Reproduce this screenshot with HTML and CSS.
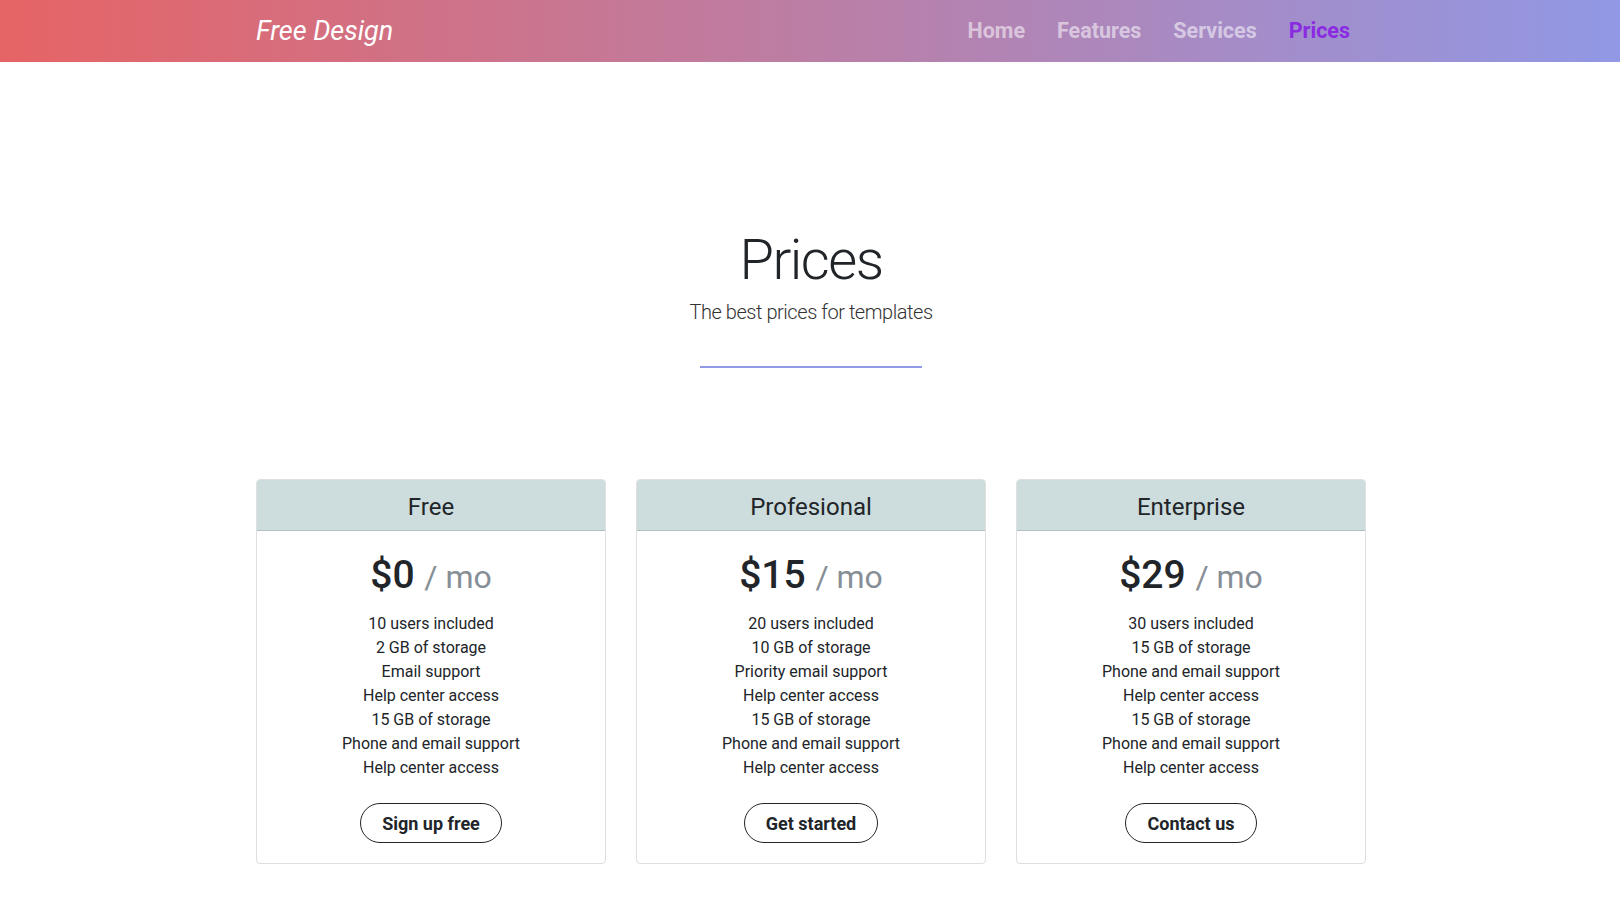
FILE: index.html
```html
<!DOCTYPE html>
<html lang="en">
<head>
<meta charset="utf-8">
<title>Free Design - Prices</title>
<link rel="stylesheet" href="styles.css">
</head>
<body>
<nav class="navbar">
  <div class="container nav-inner">
    <a class="brand" href="#">Free Design</a>
    <ul class="nav-links">
      <li><a class="nav-link" href="#">Home</a></li>
      <li><a class="nav-link" href="#">Features</a></li>
      <li><a class="nav-link" href="#">Services</a></li>
      <li><a class="nav-link active" href="#">Prices</a></li>
    </ul>
  </div>
</nav>

<main class="container">
  <header class="pricing-header">
    <h1 class="display-title">Prices</h1>
    <p class="lead">The best prices for templates</p>
    <div class="divider"></div>
  </header>

  <section class="card-deck">
    <div class="card">
      <div class="card-header"><h4 class="card-name">Free</h4></div>
      <div class="card-body">
        <h1 class="price">$0 <small class="per">/ mo</small></h1>
        <ul class="features">
          <li>10 users included</li>
          <li>2 GB of storage</li>
          <li>Email support</li>
          <li>Help center access</li>
          <li>15 GB of storage</li>
          <li>Phone and email support</li>
          <li>Help center access</li>
        </ul>
        <button class="btn" type="button">Sign up free</button>
      </div>
    </div>
    <div class="card">
      <div class="card-header"><h4 class="card-name">Profesional</h4></div>
      <div class="card-body">
        <h1 class="price">$15 <small class="per">/ mo</small></h1>
        <ul class="features">
          <li>20 users included</li>
          <li>10 GB of storage</li>
          <li>Priority email support</li>
          <li>Help center access</li>
          <li>15 GB of storage</li>
          <li>Phone and email support</li>
          <li>Help center access</li>
        </ul>
        <button class="btn" type="button">Get started</button>
      </div>
    </div>
    <div class="card">
      <div class="card-header"><h4 class="card-name">Enterprise</h4></div>
      <div class="card-body">
        <h1 class="price">$29 <small class="per">/ mo</small></h1>
        <ul class="features">
          <li>30 users included</li>
          <li>15 GB of storage</li>
          <li>Phone and email support</li>
          <li>Help center access</li>
          <li>15 GB of storage</li>
          <li>Phone and email support</li>
          <li>Help center access</li>
        </ul>
        <button class="btn" type="button">Contact us</button>
      </div>
    </div>
  </section>
</main>
</body>
</html>
```

FILE: styles.css
```css
* { box-sizing: border-box; }

html, body {
  margin: 0;
  padding: 0;
  background: #fff;
}

body {
  font-family: Roboto, "Liberation Sans", sans-serif;
  font-size: 16px;
  line-height: 1.5;
  color: #212529;
}

.container {
  max-width: 1140px;
  margin: 0 auto;
  padding: 0 14px 0 16px;
}

.navbar {
  height: 62px;
  background: linear-gradient(to right, #e66465, #9198e5);
}

.nav-inner {
  height: 100%;
  display: flex;
  align-items: center;
  justify-content: space-between;
}

.brand {
  color: #fff;
  font-style: italic;
  font-size: 27px;
  text-decoration: none;
  line-height: 1;
}

.nav-links {
  list-style: none;
  margin: 0;
  padding: 0;
  display: flex;
}

.nav-link {
  display: block;
  padding: 0 16px;
  font-size: 21.5px;
  font-weight: 700;
  color: rgba(255, 255, 255, 0.55);
  text-decoration: none;
}

.nav-link.active {
  color: #8a2be2;
}

.pricing-header {
  text-align: center;
  padding-top: 165px;
  display: flex;
  flex-direction: column;
  align-items: center;
}

.display-title {
  margin: 0;
  font-size: 56px;
  font-weight: 300;
  line-height: 1.2;
  letter-spacing: -1.5px;
}

.lead {
  margin: 3px 0 0;
  font-size: 20px;
  font-weight: 300;
  line-height: 30px;
  letter-spacing: -0.45px;
  color: #333;
}

.divider {
  width: 222px;
  height: 2px;
  margin-top: 39px;
  background: #9198e5;
}

.card-deck {
  display: flex;
  gap: 30px;
  margin-top: 111px;
}

.card {
  flex: 1;
  border: 1px solid rgba(0, 0, 0, 0.125);
  border-radius: 4px;
  overflow: hidden;
  text-align: center;
}

.card-header {
  background: #cddcdc;
  padding: 13px 20px 9px;
  border-bottom: 1px solid rgba(0, 0, 0, 0.125);
}

.card-name {
  margin: 0;
  font-size: 24px;
  font-weight: 400;
  line-height: 28px;
}

.card-body {
  padding: 20px;
}

.price {
  margin: 0 0 11px;
  font-size: 39px;
  font-weight: 500;
  line-height: 48px;
}

.per {
  font-size: 32px;
  font-weight: 400;
  color: #868e96;
}

.features {
  list-style: none;
  margin: 0 0 23px;
  padding: 0;
  line-height: 24px;
}

.btn {
  height: 40px;
  padding: 0 21px;
  font-family: inherit;
  font-size: 18px;
  font-weight: 700;
  color: #212529;
  background: #fff;
  border: 1px solid #212529;
  border-radius: 20px;
}
```
